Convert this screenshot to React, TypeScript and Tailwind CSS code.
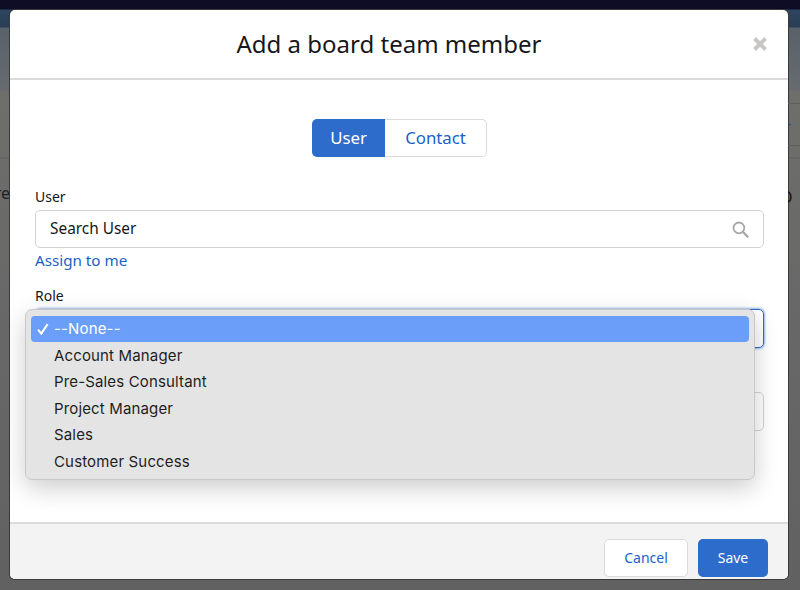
const roles = ["Account Manager", "Pre-Sales Consultant", "Project Manager", "Sales", "Customer Success"];

function SearchIcon() {
  return (
    <svg width="17" height="17" viewBox="0 0 17 17" fill="none" stroke="#a8a7a5" strokeWidth="1.8">
      <circle cx="6.9" cy="6.9" r="5.4" />
      <path d="M10.9 10.9 L15.6 15.6" strokeWidth="2.2" strokeLinecap="round" />
    </svg>
  );
}

// Menu natif ouvert sur le champ Role
function RoleMenu() {
  return (
    <div className="absolute left-[-11px] top-[-1px] w-[730px] h-[171px] rounded-[7px] border border-[#c8c8c8] bg-[#e4e4e4] px-[5px] pt-[6px] shadow-[0_8px_24px_rgba(0,0,0,0.2)] font-['Inter',sans-serif] text-[15px] tracking-[0.15px] text-[#1e1e1e]">
      <div className="flex h-[26px] items-center rounded-[4px] bg-[#6a9ef8] pl-[6px] text-white">
        <svg width="12" height="12" viewBox="0 0 12 12" fill="none" stroke="white" strokeWidth="2.1" className="mr-[5px]">
          <path d="M1 6.6 L4.3 10.6 L10.6 1.2" />
        </svg>
        --None--
      </div>
      {roles.map((role) => (
        <div key={role} className="flex h-[26.4px] items-center pl-[23px] pt-[2px]">
          {role}
        </div>
      ))}
    </div>
  );
}

export default function App() {
  return (
    <div className="flex h-[590px] w-[800px] flex-col overflow-hidden bg-[linear-gradient(to_bottom,#0f0c25_0,#0f0c25_9px,#2d4560_10px,#2b3d55_27px,#596169_28px,#666b6f_90px,#6e6e6a_91px,#6d6d6a_157px,#5e5e5c_158px,#6c6c6a_159px,#686868_300px,#616161_590px)] font-['Noto_Sans',sans-serif] text-[#16171a]">
      <div className="h-[10px]" />
      <div className="flex h-[569px]">
        <div className="relative w-[10px] overflow-hidden">
          <span className="absolute right-0 top-[171px] text-[16px] text-[#222]">re</span>
        </div>
        <div className="flex w-[778px] flex-col overflow-hidden rounded-[5px] bg-white shadow-[0_0_0_1px_#3a3a3a]">
          <div className="flex h-[70px] shrink-0 items-center border-b-2 border-[#dddbda]">
            <h1 className="flex-1 pl-[15px] text-center text-[24px] font-normal">Add a board team member</h1>
            <svg width="14" height="14" viewBox="0 0 14 14" className="mr-[21px]" stroke="#c9c7c5" strokeWidth="4">
              <path d="M1.5 1.5 L12.5 12.5 M12.5 1.5 L1.5 12.5" />
            </svg>
          </div>

          <div className="flex flex-1 flex-col pl-[25px] pr-[24px]">
            <div className="mt-[39px] flex justify-center text-[16.8px]">
              <button className="h-[38px] w-[73px] rounded-l-[5px] bg-[#2d6cca] text-white">User</button>
              <button className="h-[38px] w-[102px] rounded-r-[5px] border border-l-0 border-[#dddbda] text-[#1a5fcb]">Contact</button>
            </div>

            <label className="mt-[30px] block text-[14px] leading-[20px]">User</label>
            <div className="mt-[3px] flex h-[38px] items-center justify-between rounded-[5px] border border-[#d4d2d0] pl-[14px] pr-[14px] text-[15.4px]">
              <span>Search User</span>
              <SearchIcon />
            </div>
            <a className="text-[15.2px] leading-[24px] text-[#1a5fcb]">Assign to me</a>

            <label className="mt-[14px] block text-[14px] leading-[20px]">Role</label>
            <div className="relative mt-[3px] h-[39px] rounded-[5px] border border-[#2d6cca] shadow-[0_0_3px_#2d6cca]">
              <RoleMenu />
            </div>
            <div className="mt-[44px] h-[39px] rounded-[5px] border border-[#d4d2d0]" />
          </div>

          <div className="flex h-[57px] shrink-0 items-start justify-end gap-[10px] border-t-2 border-[#dddbda] bg-[#f3f3f3] pr-[20px] pt-[15px] text-[14px]">
            <button className="h-[38px] w-[84px] rounded-[5px] border border-[#dddbda] bg-white pb-[2px] text-[#1a5fcb]">Cancel</button>
            <button className="h-[38px] w-[70px] rounded-[5px] bg-[#2d6cca] pb-[2px] text-white">Save</button>
          </div>
        </div>
        <div className="relative w-[12px] overflow-hidden">
          <div className="absolute inset-x-0 top-[93px] h-px bg-[#5e5e5c]" />
          <div className="absolute inset-x-0 top-[135px] h-px bg-[#5e5e5c]" />
          <div className="absolute left-0 top-[114px] h-px w-[3px] bg-[#1a4a8a]" />
          <span className="absolute left-[-8px] top-[175px] text-[16px] text-[#111]">O</span>
        </div>
      </div>
    </div>
  );
}
